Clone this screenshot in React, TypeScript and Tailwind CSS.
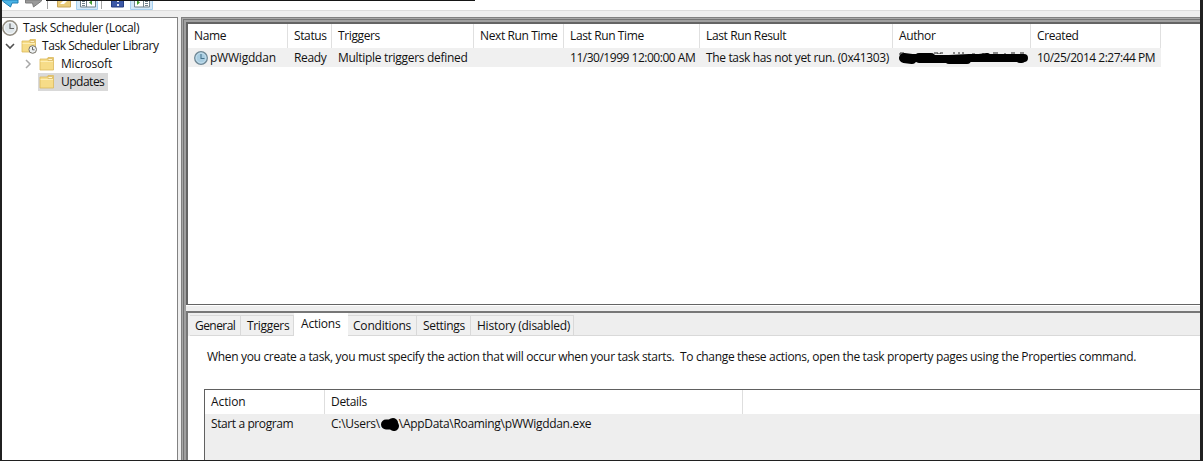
import type { ReactNode } from "react";

function Clock({ blue = false }: { blue?: boolean }) {
  return (
    <svg viewBox="0 0 16 16" className="h-full w-full">
      <circle cx="8" cy="8" r="7.2" fill={blue ? "#a9cde1" : "#dfe6ea"} stroke={blue ? "#6f8794" : "#928c80"} strokeWidth="1.5" />
      <circle cx="8" cy="8" r="5.6" fill="none" stroke={blue ? "#c6e0ee" : "#f4f7f8"} strokeWidth="1" />
      <path d="M8 3.500v5h4" fill="none" stroke={blue ? "#44728c" : "#666"} strokeWidth="1.2" />
    </svg>
  );
}

function Folder({ clock = false }: { clock?: boolean }) {
  return (
    <svg viewBox="0 0 16 16" className="h-4 w-4 shrink-0">
      <path d="M1 3h7l1-1.500h5.500V14H1z" fill="#f6dc88" stroke="#dcb95c" strokeWidth=".8" />
      <path d="M9 4.500V2.500h4.500v2z" fill="#fff5cf" stroke="#d6b257" strokeWidth=".7" />
      <path d="M1.500 5.500h12.500" stroke="#fdeeb5" />
      {clock && (
        <>
          <circle cx="11.700" cy="11.500" r="3.800" fill="#edf1f2" stroke="#77736a" />
          <path d="M11.500 9v2.800h2" fill="none" stroke="#555" strokeWidth=".9" />
        </>
      )}
    </svg>
  );
}

function Toolbar() {
  return (
    <div className="flex h-[10px] shrink-0 items-start overflow-hidden bg-white">
      <svg width="158" height="10" viewBox="2 0 158 10" className="shrink-0">
        <path d="M2.500 1l8 6 1.500-4h6V0H2z" fill="#4bb4e6" stroke="#1f7fb5" />
        <path d="M25.500 0v3h7l1 4 8-6V0z" fill="#9a9a9a" stroke="#7d7d7d" />
        <path d="M47.500 0v9M101.500 0v9" stroke="#a5a5a5" />
        <path d="M57.500 0h13v7h-13z" fill="#e9cb78" stroke="#c9a659" />
        <path d="M60 4l4-4h4l-4 4z" fill="#fff" />
        <path d="M76.500 -1h21V9.500h-21zM130.500 -1h22V9.500h-22z" fill="#d3e8f9" stroke="#a6d0f0" />
        <path d="M80.500 -1h15v8h-15zM134.500 -1h15v8h-15z" fill="#fff" stroke="#71818b" />
        <path d="M82 1.500h3M82 3.500h3M82 5.500h3M145 1.500h3M145 3.500h3M145 5.500h3" stroke="#71818b" />
        <path d="M86.500 0v7M143.500 0v7" stroke="#71818b" />
        <path d="M92 0v5l-3-2.500zM137 0v5l3-2.500z" fill="#45a035" />
        <path d="M111.500 -1h12v8h-12z" fill="#3c58a6" stroke="#263f82" />
        <path d="M117 1h2v1h-2zM117 4h2v2h-2z" fill="#e8edf8" />
      </svg>
      <div className="-ml-[114px] h-px w-[429px] bg-[#151515]" />
    </div>
  );
}

function Tree() {
  return (
    <div className="w-[176px] shrink-0 border-t border-r border-[#828282] bg-white">
      <div className="flex h-[19px] items-center pt-px">
        <span className="h-4 w-4"><Clock /></span>
        <span className="ml-[5px] tracking-[-0.32px]">Task Scheduler (Local)</span>
      </div>
      <div className="flex h-[18px] items-center pl-[3px]">
        <svg width="10" height="8" viewBox="0 0 10 8"><path d="M1 2l4 4 4-4" fill="none" stroke="#505050" strokeWidth="1.600" /></svg>
        <span className="ml-[6px] flex"><Folder clock /></span>
        <span className="ml-[5px] tracking-[-0.45px]">Task Scheduler Library</span>
      </div>
      <div className="flex h-[18px] items-center pl-[22px]">
        <svg width="8" height="10" viewBox="0 0 8 10"><path d="M2 1l4 4-4 4" fill="none" stroke="#a8a8a8" strokeWidth="1.500" /></svg>
        <span className="ml-[7px] flex"><Folder /></span>
        <span className="ml-[6px] tracking-[-0.22px]">Microsoft</span>
      </div>
      <div className="ml-[36px] flex h-[18px] w-[70px] items-center bg-[#d9d9d9] pl-px">
        <Folder />
        <span className="ml-[6px] tracking-[-0.5px]">Updates</span>
      </div>
    </div>
  );
}

function Col({ w, head, children }: { w: string; head: string; children?: ReactNode }) {
  return (
    <div className={`${w} shrink-0`}>
      <div className="flex h-6 items-center border-r border-[#e0e0e0] pl-[6px] tracking-[-0.38px]">{head}</div>
      <div className="flex h-[19px] items-center bg-[#f0f0f0] pl-[6px]">{children}</div>
    </div>
  );
}

function Tab({ box, children }: { box: string; children: ReactNode }) {
  return <div className={`${box} mt-[2px] flex h-[21px] items-center border-t border-r border-b border-[#d9d9d9] bg-[#f0f0f0]`}>{children}</div>;
}

export default function App() {
  return (
    <div className="flex h-[461px] w-[1203px] flex-col overflow-hidden border-r-[3px] border-b border-l-2 border-[#202020] bg-[#eeeeee] font-['Open_Sans',sans-serif] text-[12px] leading-[16px] tracking-[-0.33px] whitespace-pre text-[#111]">
      <Toolbar />
      <div className="h-[7px] shrink-0 border-t border-[#dcdcdc] bg-[#eeeeee]" />
      <div className="flex min-h-0 flex-1">
        <Tree />
        <div className="ml-[3px] flex min-w-0 flex-1 border-t border-l border-[#808080]">
          <div className="flex min-w-0 flex-1 border-t border-l border-[#a8a8a8]">
            <div className="flex min-w-0 flex-1 border-t border-l border-[#747474]">
              <div className="flex min-w-0 flex-1 flex-col border-t-2 border-l-2 border-[#a0a0a0]">
                <div className="flex h-[283px] shrink-0 flex-col border-t-2 border-b border-l-2 border-[#646464] bg-white">
                  <div className="flex">
                    <Col w="w-[100px]" head="Name">
                      <span className="mr-[2px] h-[14px] w-[14px] shrink-0"><Clock blue /></span>
                      <span className="tracking-[-0.22px]">pWWigddan</span>
                    </Col>
                    <Col w="w-[44px]" head="Status">Ready</Col>
                    <Col w="w-[142px]" head="Triggers"><span className="tracking-[-0.3px]">Multiple triggers defined</span></Col>
                    <Col w="w-[90px]" head="Next Run Time" />
                    <Col w="w-[136px]" head="Last Run Time"><span className="tracking-[-0.48px]">11/30/1999 12:00:00 AM</span></Col>
                    <Col w="w-[193px]" head="Last Run Result"><span className="tracking-[-0.35px]">The task has not yet run. (0x41303)</span></Col>
                    <Col w="w-[138px]" head="Author">
                      <svg width="130" height="16" viewBox="0 0 130 16">
                        <path d="M1 5V3h4M35 3h4v1M41 4V3h3M55 4V2M60 4V2M64 4V2M73 4h3M84 3v2M94 3h5M106 3v2M112 3h4M121 3h4" fill="none" stroke="#222" />
                        <path d="M5 8l8 1M20 8l12 0" fill="none" stroke="#000" strokeWidth="10" strokeLinecap="round" />
                        <path d="M5 8h14l8 1h23l20-1h25l14 0 16 0" fill="none" stroke="#000" strokeWidth="8" strokeLinecap="round" />
                        <path d="M50 10h18M80 8l8-1M121 9h1.500" fill="none" stroke="#000" strokeWidth="8" strokeLinecap="round" />
                      </svg>
                    </Col>
                    <Col w="w-[130px]" head="Created"><span className="tracking-[-0.5px]">10/25/2014 2:27:44 PM</span></Col>
                  </div>
                </div>
                <div className="h-[6px] shrink-0 border-t border-white bg-[#eeeeee]" />
                <div className="flex min-h-0 flex-1 flex-col border-t-2 border-l-2 border-[#777] bg-white">
                  <div className="flex h-[23px] shrink-0 bg-[#eeeeee] pl-[2px]">
                    <Tab box="w-[51px] pl-[5px] tracking-[-0.55px]">General</Tab>
                    <Tab box="w-[53px] pl-[6px]">Triggers</Tab>
                    <div className="h-full w-[54px] bg-white pt-[3px] pl-[7px] tracking-[-0.2px]">Actions</div>
                    <Tab box="w-[69px] pl-[5px] tracking-[-0.2px]">Conditions</Tab>
                    <Tab box="w-[54px] pl-[6px]">Settings</Tab>
                    <Tab box="w-[103px] pl-[6px] tracking-[-0.24px]">History (disabled)</Tab>
                    <div className="flex-1 border-b border-[#d9d9d9]" />
                  </div>
                  <div className="pt-[13px] pl-[19px]">When you create a task, you must specify the action that will occur when your task starts.  To change these actions, open the task property pages using the Properties command.</div>
                  <div className="mt-[24px] ml-4 flex flex-1 flex-col border-t border-l border-[#606060] bg-[#eeeeee]">
                    <div className="flex h-6 items-center bg-white">
                      <div className="flex h-full w-[120px] items-center border-r border-[#dedede] pl-[6px] tracking-[-0.1px]">Action</div>
                      <div className="flex h-full w-[418px] items-center border-r border-[#dedede] pl-[6px]">Details</div>
                    </div>
                    <div className="flex h-[20px] items-center">
                      <div className="w-[120px] pl-[6px] tracking-[-0.4px]">Start a program</div>
                      <div className="flex items-center pl-[6px]">
                        <span className="tracking-[-0.28px]">C:\Users\</span>
                        <svg width="19" height="14" viewBox="0 0 19 14"><path d="M6 7.500h6M11 7l2-1M11 7l3 2" fill="none" stroke="#000" strokeWidth="10" strokeLinecap="round" /></svg>
                        <span className="tracking-[-0.31px]">\AppData\Roaming\pWWigddan.exe</span>
                      </div>
                    </div>
                  </div>
                </div>
              </div>
            </div>
          </div>
        </div>
      </div>
    </div>
  );
}
